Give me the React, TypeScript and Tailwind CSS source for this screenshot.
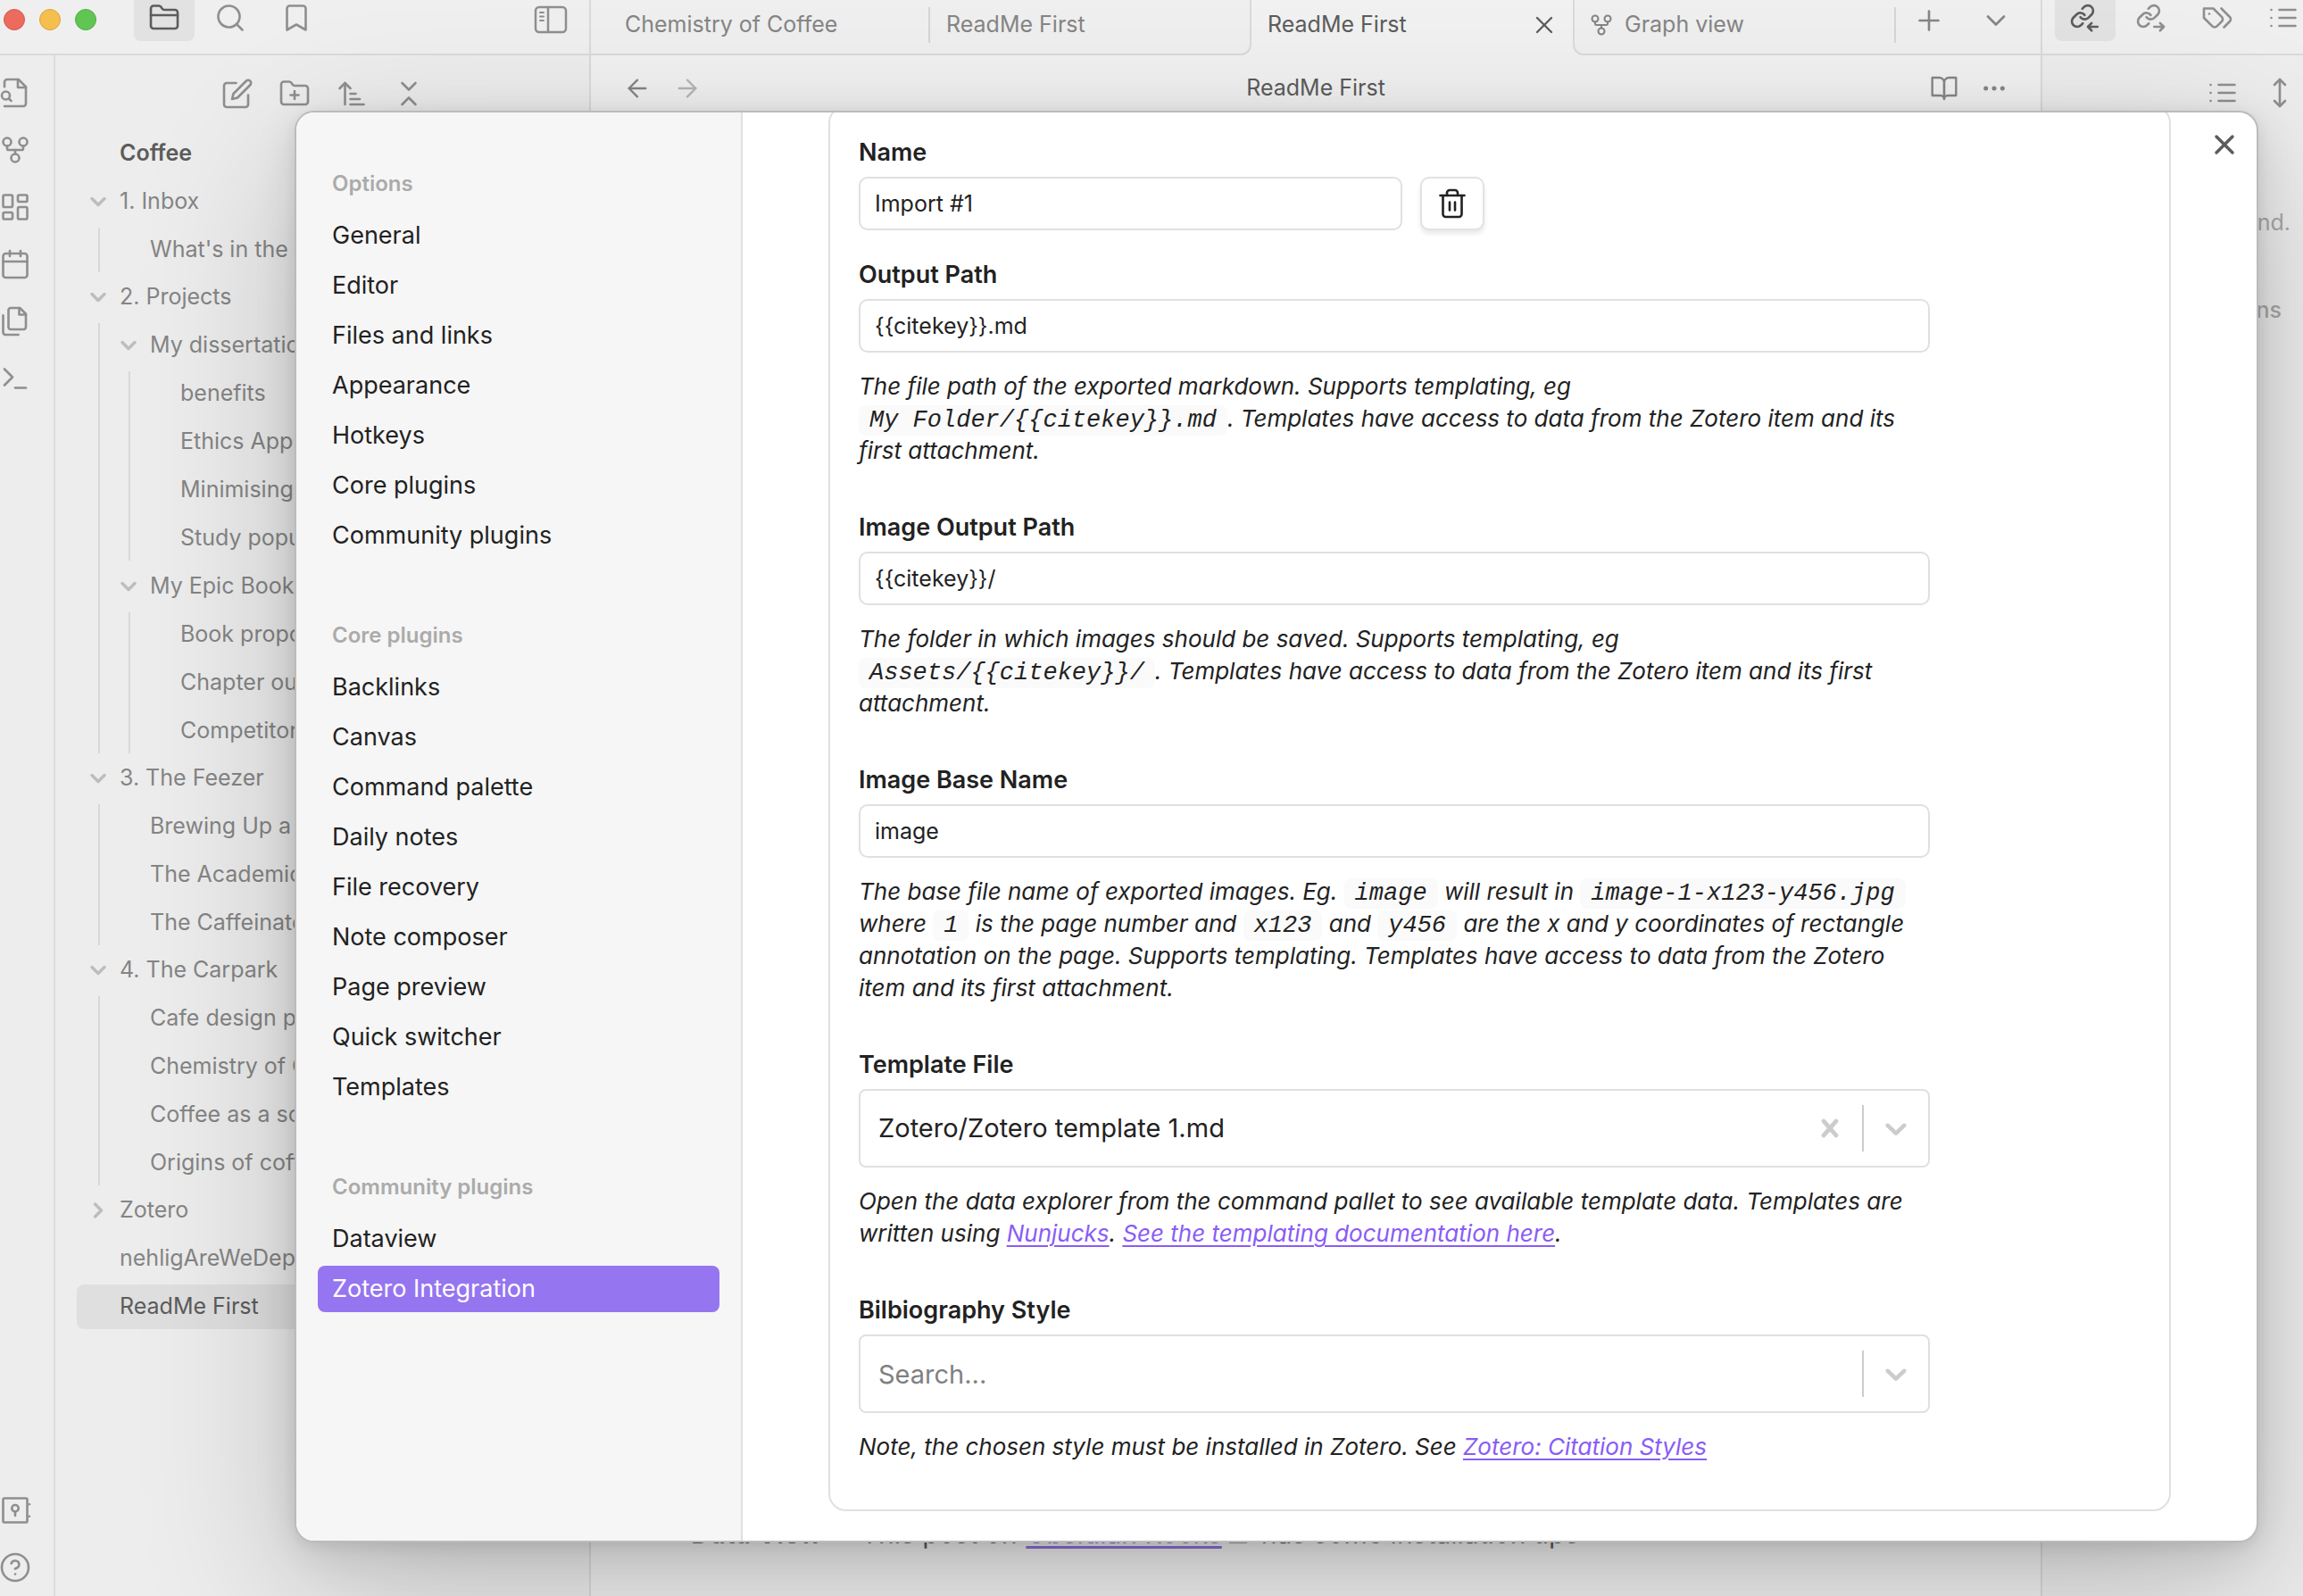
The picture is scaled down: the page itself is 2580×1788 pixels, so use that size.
import React, { type ReactNode } from "react";
import {
  ArrowLeft,
  ArrowRight,
  Calendar,
  ChevronDown,
  CircleHelp,
  Ellipsis,
  FolderClosed,
  FolderPlus,
  GitFork,
  LayoutDashboard,
  MoveVertical,
  Plus,
  Search,
  X,
} from "lucide-react";

type IconProps = { className?: string; children?: ReactNode };

function Icon({ className = "size-9", children }: IconProps) {
  return (
    <svg
      viewBox="0 0 24 24"
      className={`shrink-0 ${className}`}
      fill="none"
      stroke="currentColor"
      strokeWidth={1.75}
      strokeLinecap="round"
      strokeLinejoin="round"
      aria-hidden="true"
    >
      {children}
    </svg>
  );
}

const BookmarkIcon = () => (
  <Icon>
    <path d="M19 21l-7-4-7 4V5a2 2 0 0 1 2-2h10a2 2 0 0 1 2 2Z" />
  </Icon>
);

const GoToFileIcon = () => (
  <Icon>
    <path d="M4 22h14a2 2 0 0 0 2-2V7.5L14.5 2H6a2 2 0 0 0-2 2v3.5" />
    <path d="M14 2v6h6" />
    <circle cx="5" cy="14" r="3" />
    <path d="m7.3 16.3 1.7 1.7" />
  </Icon>
);

const FilesIcon = () => (
  <Icon>
    <path d="M15.5 2H8.6c-.4 0-.8.2-1.1.5-.3.3-.5.7-.5 1.1v12.8c0 .4.2.8.5 1.1.3.3.7.5 1.1.5h9.8c.4 0 .8-.2 1.1-.5.3-.3.5-.7.5-1.1V6.5L15.5 2z" />
    <path d="M3 7.6v12.8c0 .4.2.8.5 1.1.3.3.7.5 1.1.5h9.8" />
    <path d="M15 2v5h5" />
  </Icon>
);

const TerminalIcon = () => (
  <Icon>
    <path d="m4 17 6-6-6-6" />
    <path d="M12 19h8" />
  </Icon>
);

const EditIcon = () => (
  <Icon>
    <path d="M11 4H4a2 2 0 0 0-2 2v14a2 2 0 0 0 2 2h14a2 2 0 0 0 2-2v-7" />
    <path d="M18.5 2.5a2.121 2.121 0 0 1 3 3L12 15l-4 1 1-4 9.5-9.5z" />
  </Icon>
);

const SortIcon = () => (
  <Icon>
    <path d="m3 8 4-4 4 4" />
    <path d="M7 4v16" />
    <path d="M11 12h4" />
    <path d="M11 16h7" />
    <path d="M11 20h10" />
  </Icon>
);

const CollapseIcon = () => (
  <Icon>
    <path d="m7 20 5-5 5 5" />
    <path d="m7 4 5 5 5-5" />
  </Icon>
);

const VaultIcon = () => (
  <Icon>
    <rect x="3" y="3" width="18" height="18" rx="1" />
    <circle cx="12" cy="10.5" r="2.5" />
    <path d="M12 13v3" />
    <path d="M22.5 7.5h.1" />
    <path d="M22.5 16.5h.1" />
  </Icon>
);

const BookIcon = () => (
  <Icon className="size-8">
    <path d="M2 3h6a4 4 0 0 1 4 4v14a3 3 0 0 0-3-3H2z" />
    <path d="M22 3h-6a4 4 0 0 0-4 4v14a3 3 0 0 1 3-3h7z" />
  </Icon>
);

const ListIcon = () => (
  <Icon>
    <path d="M9 6h12M9 12h12M9 18h12" />
    <path d="M3 6h.01M3 12h.01M3 18h.01" />
  </Icon>
);

const TagsIcon = () => (
  <Icon>
    <path d="M9 5H2v7l6.29 6.29c.94.94 2.48.94 3.42 0l3.58-3.58c.94-.94.94-2.48 0-3.42L9 5Z" />
    <path d="M6 9.01V9" />
    <path d="m15 5 6.3 6.3a2.4 2.4 0 0 1 0 3.4L17 19" />
  </Icon>
);

function LinksIcon({ incoming }: { incoming?: boolean }) {
  return (
    <Icon>
      <g transform="translate(.4 1.1) scale(.8)" strokeWidth={2.2}>
        <path d="M10 13a5 5 0 0 0 7.54.54l3-3a5 5 0 0 0-7.07-7.07l-1.72 1.71" />
        <path d="M14 11a5 5 0 0 0-7.54-.54l-3 3a5 5 0 0 0 7.07 7.07l1.71-1.71" />
      </g>
      <path d={incoming ? "M21.2 18.7h-7m2.6-2.8-2.8 2.8 2.8 2.8" : "M14.2 18.7h7m-2.6-2.8 2.8 2.8-2.8 2.8"} />
    </Icon>
  );
}

const TrashIcon = () => (
  <Icon>
    <path d="M3 6h18" />
    <path d="M19 6v14c0 1-1 2-2 2H7c-1 0-2-1-2-2V6" />
    <path d="M8 6V4c0-1 1-2 2-2h4c1 0 2 1 2 2v2" />
    <path d="M10 11v6M14 11v6" />
  </Icon>
);

const SidebarIcon = () => (
  <svg viewBox="0 0 38 32" className="h-8 w-[38px]" fill="none" stroke="currentColor" strokeWidth={2.5} strokeLinecap="round" aria-hidden="true">
    <rect x="2" y="2" width="34" height="28" rx="4" />
    <path d="M16 2v28" />
    <path d="M7 8h4M7 12.500h4M7 17h4" strokeWidth={2} />
  </svg>
);

const TreeChevron = ({ open }: { open: boolean }) => (
  <svg viewBox="0 0 24 24" className={open ? "size-6" : "size-6 -rotate-90"} fill="none" stroke="#bdbdbd" strokeWidth={3.5} strokeLinecap="round" strokeLinejoin="round" aria-hidden="true">
    <path d="m5 8.500 7 7 7-7" />
  </svg>
);

const SelectChevron = () => (
  <svg viewBox="0 0 20 20" className="size-10" fill="#cccccc" aria-hidden="true">
    <path d="M4.516 7.548c0.436-0.446 1.043-0.481 1.576 0l3.908 3.747 3.908-3.747c0.533-0.481 1.141-0.446 1.574 0 0.436 0.445 0.408 1.197 0 1.615-0.406 0.418-4.695 4.502-4.695 4.502-0.217 0.223-0.502 0.335-0.787 0.335s-0.57-0.112-0.789-0.335c0 0-4.287-4.084-4.695-4.502s-0.436-1.17 0-1.615z" />
  </svg>
);

const SelectCross = () => (
  <svg viewBox="0 0 20 20" className="size-10" fill="#cccccc" aria-hidden="true">
    <path d="M14.348 14.849c-0.469 0.469-1.229 0.469-1.697 0l-2.651-3.030-2.651 3.029c-0.469 0.469-1.229 0.469-1.697 0-0.469-0.469-0.469-1.229 0-1.697l2.758-3.15-2.759-3.152c-0.469-0.469-0.469-1.228 0-1.697s1.228-0.469 1.697 0l2.652 3.031 2.651-3.031c0.469-0.469 1.228-0.469 1.697 0s0.469 1.229 0 1.697l-2.758 3.152 2.758 3.15c0.469 0.469 0.469 1.229 0 1.698z" />
  </svg>
);

/* ---------- Title bar ---------- */

function BarButton({ label, active, children }: { label: string; active?: boolean; children: ReactNode }) {
  return (
    <button
      type="button"
      aria-label={label}
      className={`flex h-[46px] w-[68px] shrink-0 items-center justify-center rounded-b-lg pb-1.5 ${active ? "bg-[#e2e2e2] text-[#5c5c5c]" : ""}`}
    >
      {children}
    </button>
  );
}

function TitleBar() {
  return (
    <header className="flex h-[62px] bg-[#efefef] text-[#8f8f8f]">
      <div className="flex w-[662px] shrink-0 border-r-2 border-b-2 border-[#dadada]">
        <div className="flex gap-4 pt-2.5 pl-1">
          <button type="button" aria-label="Close window" className="size-6 rounded-full border border-[#d9574c] bg-[#ec6a5e]" />
          <button type="button" aria-label="Minimise window" className="size-6 rounded-full border border-[#dba43c] bg-[#f4bf4f]" />
          <button type="button" aria-label="Zoom window" className="size-6 rounded-full border border-[#4fae41] bg-[#61c554]" />
        </div>
        <div className="ml-[42px] flex flex-1 gap-1.5">
          <BarButton label="Files" active><FolderClosed className="size-9" strokeWidth={1.75} /></BarButton>
          <BarButton label="Search"><Search className="size-9" strokeWidth={1.75} /></BarButton>
          <BarButton label="Bookmarks"><BookmarkIcon /></BarButton>
        </div>
        <button type="button" aria-label="Collapse sidebar" className="mr-6 h-11"><SidebarIcon /></button>
      </div>

      <div className="flex min-w-0 flex-1 bg-[#f1f1f1] text-[25px] text-[#858585]">
        <div className="flex rounded-br-xl border-r-2 border-b-2 border-[#dadada] bg-[#efefef] pl-5">
          <div className="flex w-[360px] items-center justify-between pb-1 pl-[18px]">
            Chemistry of Coffee
            <span className="h-10 w-0.5 bg-[#d4d4d4]" />
          </div>
          <div className="flex w-[358px] items-center pb-1 pl-[18px]">ReadMe First</div>
        </div>
        <div className="flex w-[360px] items-center justify-between pr-4 pb-1.5 pl-[18px] text-[#5c5c5c]">
          ReadMe First
          <button type="button" aria-label="Close tab"><X className="size-8" strokeWidth={1.75} /></button>
        </div>
        <div className="flex flex-1 rounded-bl-xl border-b-2 border-l-2 border-[#dadada] bg-[#efefef]">
          <div className="flex w-[360px] items-center gap-3 pb-1 pl-4">
            <GitFork className="size-7" strokeWidth={1.75} />
            <span className="flex-1">Graph view</span>
            <span className="h-10 w-0.5 bg-[#d4d4d4]" />
          </div>
          <button type="button" aria-label="New tab" className="flex h-[46px] w-[74px] items-center justify-center"><Plus className="size-9" strokeWidth={1.75} /></button>
          <button type="button" aria-label="Tab list" className="flex h-[46px] w-[76px] items-center justify-center"><ChevronDown className="size-9" strokeWidth={1.75} /></button>
        </div>
      </div>

      <div className="flex w-[294px] shrink-0 gap-1.5 overflow-hidden border-b-2 border-l-2 border-[#dadada] pl-3.5">
        <BarButton label="Backlinks" active><LinksIcon incoming /></BarButton>
        <BarButton label="Outgoing links"><LinksIcon /></BarButton>
        <BarButton label="Tags"><TagsIcon /></BarButton>
        <BarButton label="Outline"><ListIcon /></BarButton>
      </div>
    </header>
  );
}

/* ---------- Left side ---------- */

function Ribbon() {
  const top: [string, ReactNode][] = [
    ["Open quick switcher", <GoToFileIcon />],
    ["Open graph view", <GitFork className="size-9 shrink-0" strokeWidth={1.75} />],
    ["Create new canvas", <LayoutDashboard className="size-9 shrink-0" strokeWidth={1.75} />],
    ["Open daily note", <Calendar className="size-9 shrink-0" strokeWidth={1.75} />],
    ["Insert template", <FilesIcon />],
    ["Open command palette", <TerminalIcon />],
  ];
  return (
    <nav aria-label="Ribbon" className="flex w-[62px] shrink-0 flex-col border-r-2 border-[#dcdcdc] pt-2.5 text-[#8f8f8f]">
      {top.map(([label, icon]) => (
        <button key={label} type="button" aria-label={label} className="flex h-16 w-[34px] items-center justify-center">{icon}</button>
      ))}
      <button type="button" aria-label="Open another vault" className="mt-auto flex h-16 w-[34px] items-center justify-center"><VaultIcon /></button>
      <button type="button" aria-label="Help" className="flex h-16 w-[34px] items-center justify-center"><CircleHelp className="size-9 shrink-0" strokeWidth={1.75} /></button>
    </nav>
  );
}

type Node = { name: string; children?: Node[]; closed?: boolean; active?: boolean };

const files: Node[] = [
  { name: "1. Inbox", children: [{ name: "What's in the box" }] },
  {
    name: "2. Projects",
    children: [
      {
        name: "My dissertation",
        children: [{ name: "benefits" }, { name: "Ethics Application" }, { name: "Minimising risk" }, { name: "Study population" }],
      },
      {
        name: "My Epic Book",
        children: [{ name: "Book proposal" }, { name: "Chapter outline" }, { name: "Competitors" }],
      },
    ],
  },
  { name: "3. The Feezer", children: [{ name: "Brewing Up a Storm" }, { name: "The Academic Bean" }, { name: "The Caffeinated Mind" }] },
  {
    name: "4. The Carpark",
    children: [{ name: "Cafe design plans" }, { name: "Chemistry of Coffee" }, { name: "Coffee as a social drink" }, { name: "Origins of coffee" }],
  },
  { name: "Zotero", closed: true },
  { name: "nehligAreWeDependent" },
  { name: "ReadMe First", active: true },
];

function TreeItem({ node, nested }: { node: Node; nested?: boolean }) {
  return (
    <li>
      <button
        type="button"
        className={`flex h-[50px] w-full items-center rounded-lg text-left whitespace-nowrap ${nested ? "pl-2" : ""} ${node.active ? "bg-[#dfdfdf] text-[#5c5c5c]" : ""}`}
      >
        <span className="flex w-12 shrink-0 justify-center">
          {(node.children || node.closed) && <TreeChevron open={!node.closed} />}
        </span>
        {node.name}
      </button>
      {node.children && (
        <ul className={`mt-1 flex flex-col gap-1 border-l-2 border-[#d8d8d8] ${nested ? "ml-8" : "-mb-px ml-6"}`}>
          {node.children.map((child) => <TreeItem key={child.name} node={child} nested />)}
        </ul>
      )}
    </li>
  );
}

function FilePanel() {
  return (
    <aside className="flex w-[600px] shrink-0 flex-col overflow-hidden border-r-2 border-[#dadada]">
      <div className="flex h-[85px] items-center justify-center pl-0.5 text-[#8f8f8f]">
        <button type="button" aria-label="New note" className="flex w-16 justify-center"><EditIcon /></button>
        <button type="button" aria-label="New folder" className="flex w-16 justify-center"><FolderPlus className="size-9" strokeWidth={1.75} /></button>
        <button type="button" aria-label="Sort order" className="flex w-16 justify-center"><SortIcon /></button>
        <button type="button" aria-label="Collapse all" className="flex w-16 justify-center"><CollapseIcon /></button>
      </div>
      <div className="px-6 text-[25px] text-[#858585]">
        <h2 className="mb-1 h-[50px] pl-12 leading-[48px] font-semibold text-[#5c5c5c]">Coffee</h2>
        <ul className="flex flex-col gap-1">
          {files.map((node) => <TreeItem key={node.name} node={node} />)}
        </ul>
      </div>
    </aside>
  );
}

/* ---------- Note view and right side ---------- */

function NoteView() {
  return (
    <main className="flex min-w-0 flex-1 flex-col bg-[#f1f1f1]">
      <div className="flex h-[74px] items-center px-6 text-[#858585]">
        <button type="button" aria-label="Back" className="flex w-14 justify-center"><ArrowLeft className="size-8" strokeWidth={1.75} /></button>
        <button type="button" aria-label="Forward" className="flex w-14 justify-center text-[#b5b5b5]"><ArrowRight className="size-8" strokeWidth={1.75} /></button>
        <h1 className="flex-1 text-center text-[25px] text-[#5c5c5c]">ReadMe First</h1>
        <button type="button" aria-label="Reading view" className="flex w-14 justify-center"><BookIcon /></button>
        <button type="button" aria-label="More options" className="flex w-14 justify-center"><Ellipsis className="size-8" strokeWidth={1.75} /></button>
      </div>
      <p className="mt-auto mb-[50px] flex items-baseline pl-28 text-[30px] leading-10 text-[#5c5c5c]">
        <strong className="font-semibold">Data View</strong>
        <span className="pr-2.5 pl-11">This post on</span>
        <a href="#obsidian-rocks" className="text-[#8f72dd] underline decoration-[3px] underline-offset-3">Obsidian Rocks</a>
        <span className="mr-4 ml-2 h-5 w-5 border-2 border-[#999999]" />
        has some installation tips
      </p>
    </main>
  );
}

function RightPanel() {
  return (
    <aside className="w-[294px] shrink-0 overflow-hidden border-l-2 border-[#dadada] text-[#a8a8a8]">
      <div className="flex h-[84px] items-center pl-[170px] text-[#8f8f8f]">
        <button type="button" aria-label="Collapse results" className="flex w-16 shrink-0 justify-center"><ListIcon /></button>
        <button type="button" aria-label="Show more context" className="flex w-16 shrink-0 justify-center"><MoveVertical className="size-9 shrink-0" strokeWidth={1.75} /></button>
      </div>
      <p className="pt-[83px] pr-3.5 text-right text-[25px] leading-10">No backlinks found.</p>
      <h2 className="pt-[58px] pr-6 text-right text-[25px] leading-10 font-medium">Unlinked mentions</h2>
    </aside>
  );
}

/* ---------- Settings dialog ---------- */

const groups = [
  { title: "Options", items: ["General", "Editor", "Files and links", "Appearance", "Hotkeys", "Core plugins", "Community plugins"] },
  {
    title: "Core plugins",
    items: ["Backlinks", "Canvas", "Command palette", "Daily notes", "File recovery", "Note composer", "Page preview", "Quick switcher", "Templates"],
  },
  { title: "Community plugins", items: ["Dataview", "Zotero Integration"] },
];

function SettingsNav() {
  return (
    <nav aria-label="Settings" className="flex w-[500px] shrink-0 flex-col gap-[58px] border-r-2 border-[#e0e0e0] bg-[#f6f6f6] px-6 pt-[52px]">
      {groups.map((group) => (
        <section key={group.title} className="flex flex-col gap-1">
          <h3 className="h-14 pl-4 text-2xl leading-14 font-semibold text-[#ababab]">{group.title}</h3>
          {group.items.map((item) => (
            <button
              key={item}
              type="button"
              className={`h-[52px] rounded-lg pl-4 text-left text-[27px] ${item === "Zotero Integration" ? "bg-[#9675f0] text-white" : "text-[#222222]"}`}
            >
              {item}
            </button>
          ))}
        </section>
      ))}
    </nav>
  );
}

function Field({ id, label, note, children }: { id: string; label: string; note?: ReactNode; children: ReactNode }) {
  return (
    <div>
      <label htmlFor={id} className="mb-2 block text-[27px] leading-[38px] font-semibold">{label}</label>
      {children}
      {note && <p className="mt-5 text-[26px] leading-9 italic">{note}</p>}
    </div>
  );
}

function TextBox({ id, value, className = "w-full" }: { id: string; value: string; className?: string }) {
  return <input id={id} type="text" defaultValue={value} className={`h-[60px] rounded-[10px] border-2 border-[#e0e0e0] bg-white px-4 text-[25px] ${className}`} />;
}

const Code = ({ children }: { children: ReactNode }) => (
  <code className="rounded-lg bg-[#fafafa] px-3 py-0.5 font-['Liberation_Mono',monospace] text-[27px] leading-none whitespace-nowrap">{children}</code>
);

const Link = ({ href, children }: { href: string; children: ReactNode }) => (
  <a href={href} className="text-[#8a5cf5] underline decoration-2 underline-offset-4">{children}</a>
);

function ImportSettings() {
  return (
    <div className="min-w-0 flex-1 overflow-hidden px-24">
      <form className="-mt-2 rounded-[20px] border-2 border-[#e0e0e0] px-8 pt-8 pb-[52px]">
        <div className="flex max-w-[1200px] flex-col gap-[49px]">
          <div className="flex flex-col gap-[31px]">
            <Field id="name" label="Name">
              <div className="flex gap-5">
                <TextBox id="name" value="Import #1" className="w-[609px]" />
                <button type="button" aria-label="Delete import" className="flex h-[60px] w-[72px] items-center justify-center rounded-[10px] border-2 border-[#e2e2e2] bg-white shadow-[0_4px_5px_rgba(0,0,0,0.09)]">
                  <TrashIcon />
                </button>
              </div>
            </Field>
            <Field
              id="output"
              label="Output Path"
              note={<>The file path of the exported markdown. Supports templating, eg<br /><Code>{"My Folder/{{citekey}}.md"}</Code>. Templates have access to data from the Zotero item and its first attachment.</>}
            >
              <TextBox id="output" value="{{citekey}}.md" />
            </Field>
          </div>
          <Field
            id="image-output"
            label="Image Output Path"
            note={<>The folder in which images should be saved. Supports templating, eg<br /><Code>{"Assets/{{citekey}}/"}</Code>. Templates have access to data from the Zotero item and its first attachment.</>}
          >
            <TextBox id="image-output" value="{{citekey}}/" />
          </Field>
          <Field
            id="image-base"
            label="Image Base Name"
            note={<>The base file name of exported images. Eg. <Code>image</Code> will result in <Code>image-1-x123-y456.jpg</Code> where <Code>1</Code> is the page number and <Code>x123</Code> and <Code>y456</Code> are the x and y coordinates of rectangle annotation on the page. Supports templating. Templates have access to data from the Zotero item and its first attachment.</>}
          >
            <TextBox id="image-base" value="image" />
          </Field>
          <Field
            id="template"
            label="Template File"
            note={<>Open the data explorer from the command pallet to see available template data. Templates are written using <Link href="#nunjucks">Nunjucks</Link>. <Link href="#templating">See the templating documentation here</Link>.</>}
          >
            <div className="flex h-[88px] items-center rounded-lg border-2 border-[#e0e0e0]">
              <select id="template" className="h-full min-w-0 flex-1 appearance-none bg-transparent pl-5 text-[29px]">
                <option>Zotero/Zotero template 1.md</option>
              </select>
              <button type="button" aria-label="Clear template" className="flex w-[72px] justify-center"><SelectCross /></button>
              <span className="h-[52px] w-0.5 bg-[#cccccc]" />
              <span className="flex w-[72px] justify-center"><SelectChevron /></span>
            </div>
          </Field>
          <Field
            id="style"
            label="Bilbiography Style"
            note={<>Note, the chosen style must be installed in Zotero. See <Link href="#styles">Zotero: Citation Styles</Link></>}
          >
            <div className="flex h-[88px] items-center rounded-lg border-2 border-[#e0e0e0]">
              <input id="style" type="text" role="combobox" aria-expanded="false" placeholder="Search..." className="h-full min-w-0 flex-1 pl-5 text-[29px] placeholder:text-[#808080]" />
              <span className="h-[52px] w-0.5 bg-[#cccccc]" />
              <span className="flex w-[72px] justify-center"><SelectChevron /></span>
            </div>
          </Field>
        </div>
      </form>
    </div>
  );
}

export default function App() {
  return (
    <div className="relative flex h-screen flex-col overflow-hidden bg-[#ededed] font-[Inter,sans-serif]">
      <TitleBar />
      <div className="flex min-h-0 flex-1">
        <Ribbon />
        <FilePanel />
        <NoteView />
        <RightPanel />
      </div>
      <div
        role="dialog"
        aria-label="Settings"
        className="absolute top-[124px] right-[50px] bottom-[60px] left-[330px] flex overflow-hidden rounded-[22px] border-2 border-[#bbbbbb] bg-white text-[#222222] shadow-[0_4px_15px_rgba(0,0,0,0.07),0_13px_49px_rgba(0,0,0,0.11),0_60px_180px_rgba(0,0,0,0.2)]"
      >
        <SettingsNav />
        <ImportSettings />
        <button type="button" aria-label="Close settings" className="absolute top-[18px] right-[18px] text-[#5c5c5c]"><X className="size-9" strokeWidth={2.3} /></button>
      </div>
    </div>
  );
}
